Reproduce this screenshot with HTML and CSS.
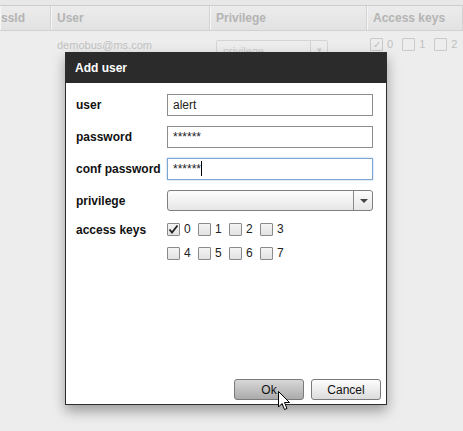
FILE: index.html
```html
<!DOCTYPE html>
<html lang="en">
<head>
  <meta charset="UTF-8" />
  <title>Users - Add user</title>
  <link rel="stylesheet" href="styles.css">
</head>
<body>
  <div class="page">
    <div class="toolbar"></div>
    <div class="grid-head">
      <div class="col c1">ssId</div>
      <div class="col c2">User</div>
      <div class="col c3">Privilege</div>
      <div class="col c4">Access keys</div>
    </div>
    <div class="grid-row">
      <div class="col c1"></div>
      <div class="col c2 email">demobus@ms.com</div>
      <div class="col c3"><div class="mini-select">privilege<span class="mini-arrow">&#9662;</span></div></div>
      <div class="col c4 mini-keys">
        <span class="mini-cb on">&#10003;</span>0
        <span class="mini-cb"></span>1
        <span class="mini-cb"></span>2
        <span class="mini-cb"></span>
      </div>
    </div>
  </div>

  <div class="dialog">
    <div class="dialog-title">Add user</div>
    <div class="dialog-body">
      <div class="form">
        <label>user</label>
        <div class="field">alert</div>

        <label>password</label>
        <div class="field">******</div>

        <label>conf password</label>
        <div class="field focus">******<span class="caret"></span></div>

        <label>privilege</label>
        <div class="select"><span class="select-arrow"></span></div>

        <label class="top">access keys</label>
        <div class="keys">
          <div class="key"><span class="cb checked"><svg viewBox="0 0 13 13" width="13" height="13"><path d="M2.5 6.5 L5 9.5 L10.5 2.5" fill="none" stroke="#222" stroke-width="1.8"/></svg></span>0</div>
          <div class="key"><span class="cb"></span>1</div>
          <div class="key"><span class="cb"></span>2</div>
          <div class="key"><span class="cb"></span>3</div>
          <div class="key"><span class="cb"></span>4</div>
          <div class="key"><span class="cb"></span>5</div>
          <div class="key"><span class="cb"></span>6</div>
          <div class="key"><span class="cb"></span>7</div>
        </div>
      </div>
      <div class="buttons">
        <button class="btn pressed">Ok</button>
        <button class="btn">Cancel</button>
      </div>
    </div>
  </div>

  <svg class="cursor" width="13" height="21" viewBox="0 0 13 21">
    <path d="M0.5 0.5 L0.5 16 L4 12.5 L6.5 18.5 L9 17.5 L6.5 11.5 L11.5 11.5 Z" fill="#fff" stroke="#000" stroke-width="1"/>
  </svg>
</body>
</html>
```

FILE: styles.css
```css
body {
  margin: 0;
  background: #ededed;
  font-family: "Liberation Sans", Arial, sans-serif;
  width: 463px;
  height: 431px;
  overflow: hidden;
  position: relative;
}
.page {
  color: #b9b9b9;
}
.toolbar {
  height: 5px;
  border-bottom: 1px solid #cdcdcd;
  background: #e8e8e8;
}
.grid-head {
  display: flex;
  height: 24px;
  background: linear-gradient(#ececec, #e2e2e2);
  border-bottom: 1px solid #d2d2d2;
  font-size: 12px;
  font-weight: bold;
  color: #b4b4b4;
}
.col {
  flex-shrink: 0;
  box-sizing: border-box;
  overflow: hidden;
  white-space: nowrap;
}
.grid-head .col {
  line-height: 24px;
  border-right: 1px solid #d3d3d3;
  box-shadow: inset 1px 0 0 #f6f6f6;
  padding-left: 6px;
}
.grid-head .c1 {
  padding-left: 1px;
}
.col.c1 { width: 51px; }
.col.c2 { width: 159px; }
.col.c3 { width: 157px; }
.col.c4 { flex: 1 0 auto; }
.grid-row {
  display: flex;
  height: 30px;
  font-size: 11px;
}
.grid-row .col {
  padding-left: 6px;
}
.email {
  padding-top: 8px;
  color: #c2c2c2;
}
.mini-select {
  margin-top: 9px;
  width: 112px;
  height: 20px;
  border: 1px solid #d4d4d4;
  border-radius: 2px;
  box-sizing: border-box;
  padding: 4px 6px;
  color: #cdcdcd;
  position: relative;
}
.mini-arrow {
  position: absolute;
  right: 0;
  top: 0;
  bottom: 0;
  width: 16px;
  border-left: 1px solid #d4d4d4;
  text-align: center;
  font-size: 9px;
  line-height: 18px;
}
.grid-row .mini-keys {
  padding: 6px 0 0 3px;
  display: flex;
  align-items: center;
  gap: 4px;
  height: 20px;
  color: #c0c0c0;
}
.mini-cb {
  display: inline-block;
  width: 11px;
  height: 11px;
  border: 1px solid #cacaca;
  border-radius: 1px;
  font-size: 10px;
  line-height: 11px;
  text-align: center;
  margin-left: 5px;
}
.mini-cb.on {
  margin-left: 0;
}

.dialog {
  position: absolute;
  left: 65px;
  top: 52px;
  width: 322px;
  height: 353px;
  box-sizing: border-box;
  border: 1px solid #2d2d2d;
  background: #fff;
  box-shadow: 0 6px 12px rgba(0, 0, 0, 0.35);
  display: flex;
  flex-direction: column;
}
.dialog-title {
  height: 30px;
  background: #2b2b2b;
  color: #fff;
  font-size: 12px;
  font-weight: bold;
  line-height: 31px;
  padding-left: 9px;
}
.dialog-body {
  flex: 1;
  display: flex;
  flex-direction: column;
  padding: 11px 5px 4px 10px;
}
.form {
  display: grid;
  grid-template-columns: 91px 206px;
  row-gap: 10px;
  align-items: center;
  font-size: 12px;
}
.form label {
  font-weight: bold;
  color: #111;
}
.form label.top {
  align-self: start;
  margin-top: 2px;
}
.field {
  height: 22px;
  box-sizing: border-box;
  border: 1px solid #8c8c8c;
  padding: 0 5px;
  line-height: 20px;
  color: #222;
  font-size: 12px;
}
.field.focus {
  border-color: #7fa4d2;
  box-shadow: 0 0 2px #a9c6ea;
}
.caret {
  display: inline-block;
  width: 1px;
  height: 15px;
  background: #000;
  vertical-align: -3px;
}
.select {
  height: 21px;
  box-sizing: border-box;
  border: 1px solid #7f7f7f;
  border-radius: 3px;
  background: linear-gradient(#fdfdfd, #e6e6e6);
  position: relative;
}
.select-arrow {
  position: absolute;
  right: 0;
  top: 0;
  bottom: 0;
  width: 18px;
  border-left: 1px solid #8a8a8a;
}
.select-arrow::after {
  content: "";
  position: absolute;
  left: 6px;
  top: 8px;
  border-left: 4px solid transparent;
  border-right: 4px solid transparent;
  border-top: 4px solid #444;
}
.keys {
  display: grid;
  grid-template-columns: repeat(4, 31px);
  row-gap: 10px;
  margin-top: 1px;
  color: #222;
}
.key {
  display: flex;
  align-items: center;
  gap: 4px;
  height: 14px;
}
.cb {
  width: 13px;
  height: 13px;
  box-sizing: border-box;
  border: 1px solid #8a8a8a;
  border-radius: 1px;
  background: linear-gradient(#f4f4f4, #e2e2e2);
  position: relative;
}
.cb svg {
  position: absolute;
  left: -1px;
  top: -1px;
}
.buttons {
  margin-top: auto;
  display: flex;
  justify-content: flex-end;
  gap: 7px;
}
.btn {
  width: 70px;
  height: 21px;
  font-family: "Liberation Sans", Arial, sans-serif;
  font-size: 12px;
  color: #111;
  border: 1px solid #7a7a7a;
  border-radius: 3px;
  background: linear-gradient(#fdfdfd, #dcdcdc);
  padding: 0;
}
.btn.pressed {
  background: linear-gradient(#d8d8d8, #ababab);
}
.cursor {
  position: absolute;
  left: 278px;
  top: 391px;
}
```
